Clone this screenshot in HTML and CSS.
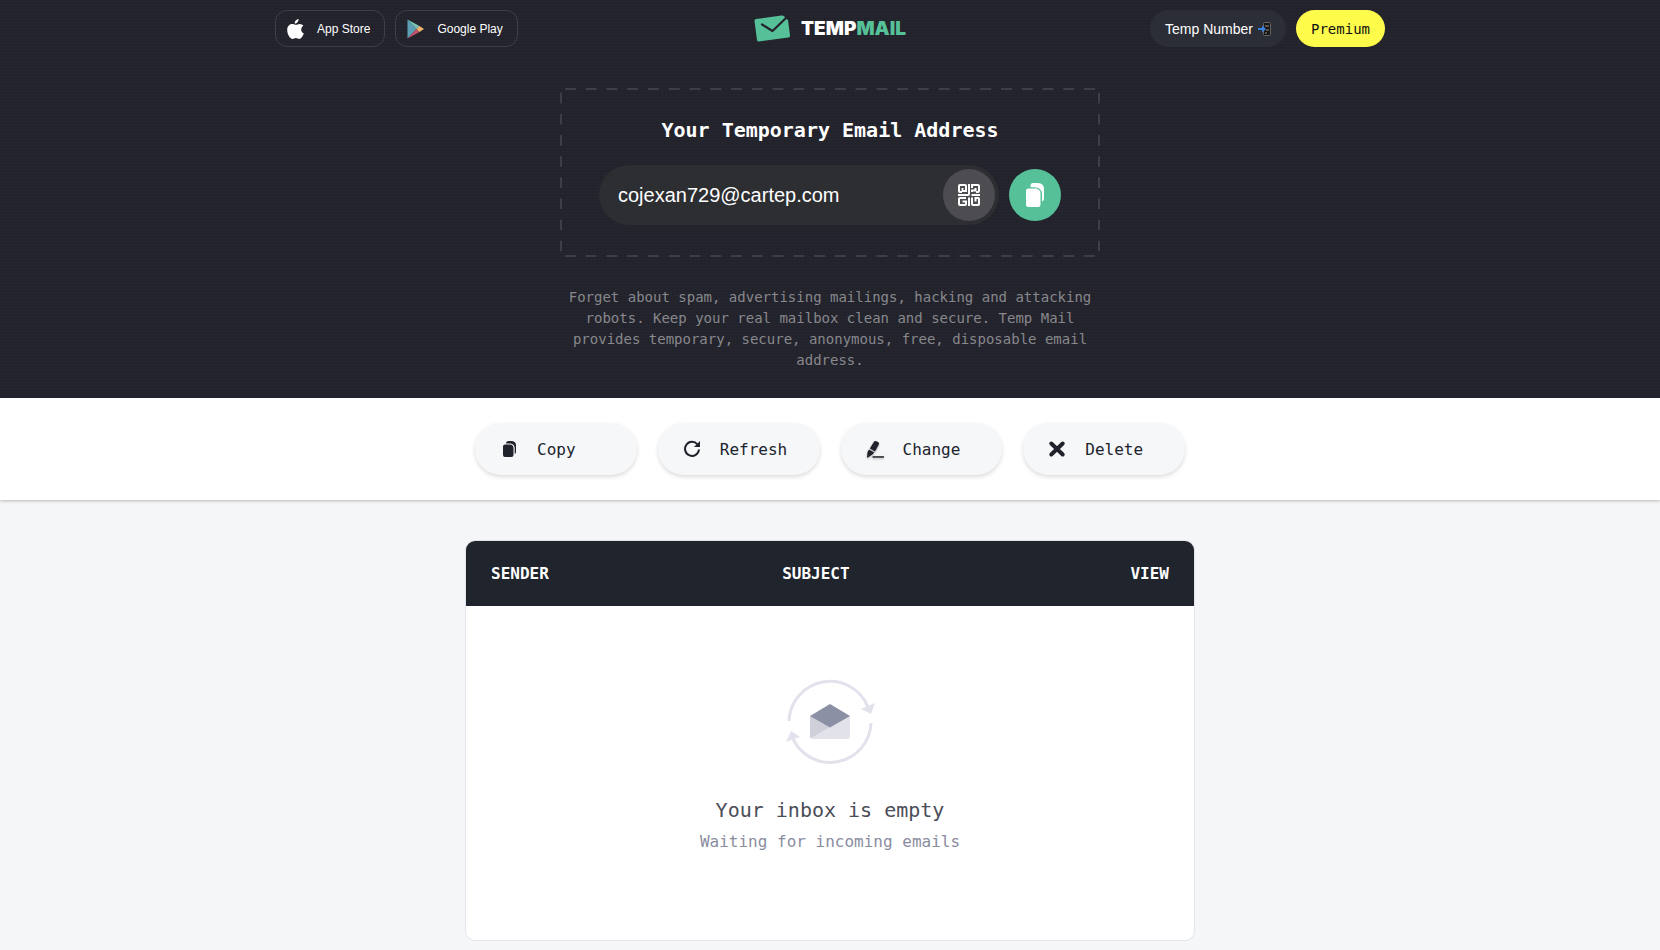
FILE: index.html
```html
<!DOCTYPE html>
<html lang="en">
<head>
  <meta charset="UTF-8" />
  <meta name="viewport" content="width=device-width, initial-scale=1.0" />
  <title>Temp Mail</title>
  <link rel="stylesheet" href="styles.css">
</head>
<body>
  <header class="hero">
    <nav class="navbar">
      <div class="nav-left">
        <a class="store-btn" href="#">
          <svg class="apple-icon" viewBox="0 0 17 20"><path fill="#fff" d="M11.6 0c.1 1.2-.4 2.400-1.100 3.200-.7.9-1.800 1.500-2.800 1.400-.1-1.100.4-2.300 1.100-3C9.500.7 10.700.1 11.600 0zM14.200 10.500c0-1.900 1.100-3 2.200-3.700-.9-1.200-2.200-1.900-3.700-1.900-1.600 0-2.800.9-3.700.9S6.700 5 5.200 5C3 5 .2 6.900.2 11c0 4.200 2.900 8.900 5.200 8.900 1.300 0 2-.8 3.500-.8 1.400 0 2 .8 3.400.8 1.900 0 3.700-3 4.500-5.400-1.600-.7-2.600-2.100-2.600-4z"/></svg>
          App Store
        </a>
        <a class="store-btn" href="#">
          <svg class="play-icon" viewBox="0 0 17 20">
            <path fill="#5c9fb5" d="M.5.500v19L9.500 10z"/>
            <path fill="#77c3b4" d="M.5.500 9.500 10l3-3z"/>
            <path fill="#c4526c" d="M.5 19.500 9.500 10l3 3z"/>
            <path fill="#f0b36d" d="M12.500 7 17 10l-4.500 3-3-3z"/>
          </svg>
          Google Play
        </a>
      </div>
      <a class="logo" href="#">
        <svg class="logo-icon" viewBox="0 0 37 27">
          <path fill="#56c198" d="M2 4 27.500.5q1.500-.2 2.500.700L32.500 4 34 5l2 15.500q.1 1.500-1.500 2L5 26.500q-1.700.2-2-1.500L.5 6Q.4 4.300 2 4z"/>
          <path fill="none" stroke="#23232d" stroke-width="2.200" stroke-linecap="round" stroke-linejoin="round" d="M8 9.500 18.500 16 33 2"/>
        </svg>
        <span>TEMP<span class="logo-green">MAIL</span></span>
      </a>
      <div class="nav-right">
        <a class="number-btn" href="#">
          Temp Number
          <svg class="phone-icon" viewBox="0 0 13 14">
            <rect x="5.500" y=".500" width="7" height="13" rx="1" fill="#17171b" stroke="#66645f"/>
            <path fill="#5c5348" d="M7 3h4v2H7zM8 7h3v2H8zM7 10h2v2H7z"/>
            <path fill="#3b82dc" d="M0 6h4V3.500L8 7l-4 3.500V8H0z"/>
          </svg>
        </a>
        <a class="premium-btn" href="#">Premium</a>
      </div>
    </nav>

    <section class="address-box">
      <h1><label for="email">Your Temporary Email Address</label></h1>
      <div class="address-row">
        <div class="address-field">
          <input type="text" id="email" value="cojexan729@cartep.com" readonly />
          <button class="round-btn qr-btn" aria-label="QR code">
            <svg viewBox="0 0 22 22" width="22" height="22" fill="none" stroke="#fff" stroke-width="2">
              <path d="M4 8H2a1 1 0 0 1-1-1V2a1 1 0 0 1 1-1h5a1 1 0 0 1 1 1v5H4.500V4"/>
              <path d="M11 0v10a1 1 0 0 1-1 1H0"/>
              <path d="M18 8h2a1 1 0 0 0 1-1V2a1 1 0 0 0-1-1h-6v3M14 8V6.500h3.500V4"/>
              <path d="M13.500 11H22M11 13.500V22"/>
              <path d="M8 14H2a1 1 0 0 0-1 1v5a1 1 0 0 0 1 1h5a1 1 0 0 0 1-1v-2.500H4.500"/>
              <path d="M14 13.500V20a1 1 0 0 0 1 1h5a1 1 0 0 0 1-1v-5a1 1 0 0 0-1-1h-2.500v3.500"/>
            </svg>
          </button>
        </div>
        <button class="round-btn copy-btn" aria-label="Copy address">
          <svg viewBox="0 0 18 24" width="18" height="24" fill="#fff">
            <path d="M4.500 4V2.500A2.500 2.500 0 0 1 7 0h5q6 .5 6 6v10a2.500 2.500 0 0 1-2 2.400V11q-.5-6-6-6.500z"/>
            <path d="M2.500 5.500H10q4.300.8 4.500 5v11A2.500 2.500 0 0 1 12 24H2.500A2.500 2.500 0 0 1 0 21.500V8a2.500 2.500 0 0 1 2.500-2.500z"/>
          </svg>
        </button>
      </div>
    </section>

    <p class="intro">Forget about spam, advertising mailings, hacking and attacking robots. Keep your real mailbox clean and secure. Temp Mail provides temporary, secure, anonymous, free, disposable email address.</p>
  </header>

  <div class="actions">
    <div class="actions-inner">
      <button class="action-btn">
        <svg viewBox="0 0 20 20">
          <path d="M7 4.500C7 3 8 2 9.500 2H13q3.800.4 4 4v7c0 1-.5 1.600-1.300 1.800V8.500q-.5-3.600-4.200-4z"/>
          <path d="M6 5.500h5q3.300.4 3.500 3.500v7a2 2 0 0 1-2 2H6a2 2 0 0 1-2-2V7.500a2 2 0 0 1 2-2z"/>
        </svg>
        Copy
      </button>
      <button class="action-btn">
        <svg viewBox="0 0 20 20">
          <path fill="none" stroke="#20232b" stroke-width="2" d="M15.500 5.500A7 7 0 1 0 17 10.500"/>
          <path d="M18 2v6h-6z"/>
        </svg>
        Refresh
      </button>
      <button class="action-btn">
        <svg class="pen-icon" viewBox="0 0 20 20">
          <path d="M8.500 3.500Q9.500 1.500 11.500 2.300L13 3q1.600 1 .7 2.800L10 12.500 4.800 9.500z"/>
          <path d="M4 10.500 9.300 13.500 8 15l-5 3.500H2L2.500 13z"/>
          <path d="M7.500 17.200H19v1.500H7.500z"/>
        </svg>
        Change
      </button>
      <button class="action-btn">
        <svg viewBox="0 0 20 20"><path fill="none" stroke="#20232b" stroke-width="4" stroke-linecap="round" d="M4.300 4.500l11.400 11M15.700 4.500 4.300 15.500"/></svg>
        Delete
      </button>
    </div>
  </div>

  <main class="inbox">
    <table class="inbox-table">
      <thead>
        <tr>
          <th class="col-sender">SENDER</th>
          <th>SUBJECT</th>
          <th class="col-view">VIEW</th>
        </tr>
      </thead>
      <tbody>
        <tr>
          <td class="empty" colspan="3">
            <svg class="empty-icon" viewBox="0 0 90 88" width="90" height="88">
              <path fill="none" stroke="#e2e2ec" stroke-width="3" d="M4 43A41 41 0 0 1 83 29M86 45A41 41 0 0 1 8 61"/>
              <path fill="#e2e2ec" d="M76 31l14-6-4 11zM1 64 6 53l9 6z"/>
              <path fill="#e2e2eb" d="M25 37.500 45 48 65 37.500V58a3 3 0 0 1-3 3H28a3 3 0 0 1-3-3z"/>
              <path fill="#cfcfda" d="M25 37.500 45 49 26 60a3 3 0 0 1-1-2z"/>
              <path fill="#8c90a5" d="M45 26 65 38 45 49.500 25 38z"/>
            </svg>
            <p class="empty-title">Your inbox is empty</p>
            <p class="empty-text">Waiting for incoming emails</p>
          </td>
        </tr>
      </tbody>
    </table>
  </main>
</body>
</html>
```
FILE: styles.css
```css
* {
  box-sizing: border-box;
}
body {
  margin: 0;
  font-family: "DejaVu Sans Mono", monospace;
  background: #f5f6f8;
  color: #20232b;
}
h1, p {
  margin: 0;
}
a {
  text-decoration: none;
}
button {
  border: none;
  font-family: inherit;
  cursor: pointer;
}

/* dark top part with a faint woven texture */
.hero {
  padding: 10px 16px 27px;
  background-color: #23232d;
  background-image:
    repeating-linear-gradient(0deg, rgba(255,255,255,0.01) 0 1px, transparent 1px 3px),
    repeating-linear-gradient(90deg, rgba(0,0,0,0.04) 0 1px, transparent 1px 4px);
}
.navbar {
  display: grid;
  grid-template-columns: 1fr auto 1fr;
  align-items: center;
  max-width: 1110px;
  margin: 0 auto;
  font-family: "Liberation Sans", Arial, sans-serif;
}
.nav-left, .nav-right {
  display: flex;
  gap: 10px;
}
.nav-right {
  justify-content: flex-end;
}
.store-btn {
  display: flex;
  align-items: center;
  gap: 13px;
  height: 37px;
  padding: 0 14px 0 11px;
  border: 1px solid #3e3f48;
  border-radius: 12px;
  color: #fff;
  font-size: 12px;
}
.apple-icon, .play-icon {
  width: 17px;
  height: 20px;
}
.logo {
  display: flex;
  align-items: center;
  gap: 10px;
  color: #fff;
  font-family: Inter, sans-serif;
  font-size: 19px;
  font-weight: 900;
}
.logo-icon {
  width: 37px;
  height: 27px;
}
.logo-green {
  color: #56c198;
}
.number-btn, .premium-btn {
  display: flex;
  align-items: center;
  height: 37px;
  padding: 0 15px;
  border-radius: 19px;
  font-size: 14px;
}
.number-btn {
  gap: 5px;
  background: #2b2e36;
  color: #fff;
}
.phone-icon {
  width: 13px;
  height: 14px;
}
.premium-btn {
  background: #fffb4b;
  color: #111;
  font-family: "DejaVu Sans Mono", monospace;
}

/* each layer is one dashed side */
.address-box {
  max-width: 540px;
  margin: 41px auto 0;
  padding: 29px 39px 32px;
  background:
    linear-gradient(90deg, transparent 25%, #3e3e48 25% 75%, transparent 75%) left top / 21px 2px round no-repeat,
    linear-gradient(90deg, transparent 25%, #3e3e48 25% 75%, transparent 75%) left bottom / 21px 2px round no-repeat,
    linear-gradient(transparent 25%, #3e3e48 25% 75%, transparent 75%) left top / 2px 21px no-repeat round,
    linear-gradient(transparent 25%, #3e3e48 25% 75%, transparent 75%) right top / 2px 21px no-repeat round;
}
.address-box h1 {
  color: #fff;
  font-size: 20px;
  line-height: 26px;
  text-align: center;
}
.address-row {
  display: flex;
  align-items: center;
  gap: 10px;
  margin-top: 22px;
}
.address-field {
  display: flex;
  flex: 1;
  align-items: center;
  min-width: 0;
  height: 60px;
  padding: 0 4px 0 19px;
  border-radius: 30px;
  background: #2d2e32;
}
.address-field input {
  flex: 1;
  min-width: 0;
  padding: 0;
  border: none;
  outline: none;
  background: none;
  color: #fff;
  font-family: "Liberation Sans", Arial, sans-serif;
  font-size: 20px;
}
.round-btn {
  display: flex;
  flex: none;
  align-items: center;
  justify-content: center;
  width: 52px;
  height: 52px;
  padding: 0;
  border-radius: 50%;
}
.qr-btn {
  background: #4c4c51;
}
.copy-btn {
  background: #56c198;
}
.intro {
  max-width: 540px;
  margin: 30px auto 0;
  color: #88888c;
  font-size: 14px;
  line-height: 21px;
  text-align: center;
}

.actions {
  padding: 25px 16px;
  background: #fff;
  box-shadow: 0 1px 3px rgba(0,0,0,0.25);
}
.actions-inner {
  display: grid;
  grid-template-columns: repeat(4, 1fr);
  gap: 21px;
  max-width: 710px;
  margin: 0 auto;
}
.action-btn {
  display: flex;
  align-items: center;
  gap: 18px;
  height: 52px;
  padding: 0 24px;
  border-radius: 26px;
  background: #f5f7f9;
  box-shadow: 0 2px 4px rgba(0,0,0,0.14);
  color: #20232b;
  font-size: 16px;
}
.action-btn svg {
  flex: none;
  width: 20px;
  height: 20px;
  fill: #20232b;
}
.pen-icon {
  filter: drop-shadow(0 1px 1px rgba(0,0,0,0.3));
}

.inbox {
  max-width: 730px;
  margin: 40px auto 8px;
  overflow: hidden;
  border: 1px solid #e2e4ea;
  border-radius: 10px;
  background: #fff;
}
.inbox-table {
  width: 100%;
  border-collapse: collapse;
}
.inbox-table th {
  height: 65px;
  padding: 0 25px;
  background: #20242c;
  color: #fff;
  font-size: 16px;
  text-align: left;
}
.inbox-table .col-sender {
  width: 40%;
}
.inbox-table .col-view {
  text-align: right;
}
.empty {
  padding: 72px 25px 86px;
  text-align: center;
}
.empty-icon {
  display: block;
  margin: 0 auto;
}
.empty-title {
  margin-top: 29px;
  color: #4b4d57;
  font-size: 20px;
  line-height: 30px;
}
.empty-text {
  margin-top: 5px;
  color: #8a8da0;
  font-size: 16px;
  line-height: 24px;
}
```
